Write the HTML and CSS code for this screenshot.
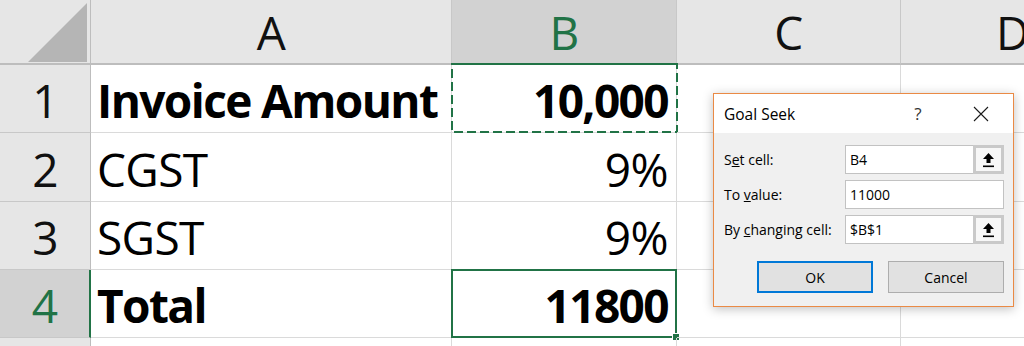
FILE: index.html
```html
<!DOCTYPE html>
<html>
<head>
<meta charset="utf-8">
<title>Goal Seek</title>
<link rel="stylesheet" href="styles.css">
</head>
<body>
<div class="sheet">
  <!-- header row -->
  <div class="corner"><span class="tri"></span></div>
  <div class="colhead">A</div>
  <div class="colhead sel">B</div>
  <div class="colhead">C</div>
  <div class="colhead">D</div>

  <div class="rowhead">1</div>
  <div class="cell bold">Invoice Amount</div>
  <div class="cell num bold">10,000
    <svg class="ants" width="227" height="70" viewBox="0 0 227 70"><rect x="1" y="1" width="225" height="68" fill="none" stroke="#217346" stroke-width="2" stroke-dasharray="9 4"/></svg>
  </div>
  <div class="cell"></div>
  <div class="cell"></div>

  <div class="rowhead">2</div>
  <div class="cell">CGST</div>
  <div class="cell num">9%</div>
  <div class="cell"></div>
  <div class="cell"></div>

  <div class="rowhead">3</div>
  <div class="cell">SGST</div>
  <div class="cell num">9%</div>
  <div class="cell"></div>
  <div class="cell"></div>

  <div class="rowhead sel">4</div>
  <div class="cell bold">Total</div>
  <div class="cell num bold">11800<span class="active"></span><span class="handle"></span></div>
  <div class="cell"></div>
  <div class="cell"></div>

  <div class="rowhead"></div>
  <div class="cell"></div>
  <div class="cell"></div>
  <div class="cell"></div>
  <div class="cell"></div>

  <!-- Goal Seek dialog -->
  <div class="dialog">
    <div class="titlebar">
      <span class="title">Goal Seek</span>
      <span class="help">?</span>
      <span class="close">
        <svg width="16" height="16" viewBox="0 0 16 16"><path d="M1 1 L15 15 M15 1 L1 15" stroke="#1a1a1a" stroke-width="1.1" fill="none"/></svg>
      </span>
    </div>
    <div class="dlgbody">
      <div class="fields">
        <label>S<u>e</u>t cell:</label>
        <div class="field"><span class="val">B4</span><span class="refbtn"><svg width="13" height="16" viewBox="0 0 13 16"><path d="M6.5 1 L12 7 H8.5 V11 H4.5 V7 H1 Z" fill="#000"/><rect x="1" y="13.5" width="11" height="1.6" fill="#000"/></svg></span></div>
        <label>To <u>v</u>alue:</label>
        <div class="field"><span class="val">11000</span></div>
        <label>By <u>c</u>hanging cell:</label>
        <div class="field"><span class="val">$B$1</span><span class="refbtn"><svg width="13" height="16" viewBox="0 0 13 16"><path d="M6.5 1 L12 7 H8.5 V11 H4.5 V7 H1 Z" fill="#000"/><rect x="1" y="13.5" width="11" height="1.6" fill="#000"/></svg></span></div>
      </div>
      <div class="buttons">
        <span class="btn default">OK</span>
        <span class="btn">Cancel</span>
      </div>
    </div>
  </div>
</div>
</body>
</html>
```

FILE: styles.css
```css
body {
  margin: 0;
  background: #fff;
  font-family: "Open Sans", "Liberation Sans", sans-serif;
  overflow: hidden;
}

/* the worksheet grid */
.sheet {
  position: relative;
  display: grid;
  grid-template-columns: 91px 361px 225px 224px 224px;
  grid-template-rows: 65px 68px 69px 68px 68px 30px;
  width: 1024px;
  height: 346px;
  overflow: hidden;
  font-size: 46px;
  letter-spacing: -0.6px;
  color: #000;
}

.corner {
  background: #e6e6e6;
  border-right: 1px solid #bdbdbd;
  border-bottom: 2px solid #bdbdbd;
  position: relative;
}
.tri {
  position: absolute;
  left: 28px;
  top: 3px;
  width: 59px;
  height: 59px;
  background: #b5b5b5;
  clip-path: polygon(100% 0, 100% 100%, 0 100%);
}

.colhead {
  background: #e6e6e6;
  border-right: 1px solid #c8c8c8;
  border-bottom: 2px solid #bdbdbd;
  display: flex;
  align-items: flex-end;
  justify-content: center;
  line-height: 46px;
  padding-bottom: 8px;
  box-sizing: border-box;
  color: #111;
}
.colhead.sel {
  background: #d2d2d2;
  color: #217346;
  border-bottom-color: #217346;
}

.rowhead {
  background: #e6e6e6;
  border-right: 1px solid #bdbdbd;
  border-bottom: 1px solid #c8c8c8;
  display: flex;
  align-items: flex-end;
  justify-content: center;
  line-height: 46px;
  padding-bottom: 9px;
  box-sizing: border-box;
  color: #111;
}
.rowhead.sel {
  background: #d2d2d2;
  color: #217346;
  border-right: 2px solid #217346;
}

.cell {
  position: relative;
  border-right: 1px solid #dadada;
  border-bottom: 1px solid #dadada;
  display: flex;
  align-items: flex-end;
  line-height: 46px;
  padding: 0 6px 9px 6px;
  box-sizing: border-box;
  white-space: nowrap;
}
.cell.num {
  justify-content: flex-end;
  padding-right: 8px;
}
.bold {
  font-weight: bold;
  letter-spacing: -1.6px;
}

/* copy marquee on B1 */
.ants {
  position: absolute;
  left: -1px;
  top: -2px;
}

/* active cell B4 */
.active {
  position: absolute;
  left: -1px;
  top: -1px;
  right: -1px;
  bottom: -1px;
  border: 2px solid #217346;
}
.handle {
  position: absolute;
  right: -4px;
  bottom: -4px;
  width: 6px;
  height: 6px;
  background: #217346;
  border: 1px solid #fff;
}

/* Goal Seek dialog */
.dialog {
  position: absolute;
  left: 713px;
  top: 93px;
  width: 301px;
  height: 214px;
  box-sizing: border-box;
  border: 1px solid #ea8a45;
  background: #f0f0f0;
  box-shadow: 0 2px 10px rgba(0,0,0,0.25);
  font-size: 14px;
  letter-spacing: 0;
  color: #000;
  display: flex;
  flex-direction: column;
}
.titlebar {
  height: 39px;
  background: #fff;
  display: flex;
  align-items: center;
  padding: 0 17px 0 10px;
}
.title {
  font-size: 15.5px;
  flex: 1;
}
.help {
  width: 30px;
  text-align: center;
  font-size: 17px;
  color: #333;
  margin-right: 33px;
}
.close {
  width: 30px;
  display: flex;
  justify-content: center;
}

.dlgbody {
  padding: 12px 9px 0 10px;
}
.fields {
  display: grid;
  grid-template-columns: 121px 1fr;
  grid-auto-rows: 29px;
  row-gap: 6px;
  align-items: center;
}
.field {
  height: 29px;
  box-sizing: border-box;
  border: 1px solid #c2c2c2;
  background: #fff;
  display: flex;
  align-items: center;
}
.field .val {
  flex: 1;
  padding-left: 4px;
}
.refbtn {
  width: 31px;
  height: 29px;
  margin: -1px -1px -1px 0;
  box-sizing: border-box;
  border: 3px solid #c9c9c9;
  background: #f7f7f7;
  display: flex;
  align-items: center;
  justify-content: center;
}

.buttons {
  display: flex;
  justify-content: flex-end;
  gap: 15px;
  margin-top: 17px;
}
.btn {
  width: 116px;
  height: 32px;
  box-sizing: border-box;
  border: 1px solid #adadad;
  background: #e1e1e1;
  display: flex;
  align-items: center;
  justify-content: center;
}
.btn.default {
  border: 2px solid #0078d7;
}
```
